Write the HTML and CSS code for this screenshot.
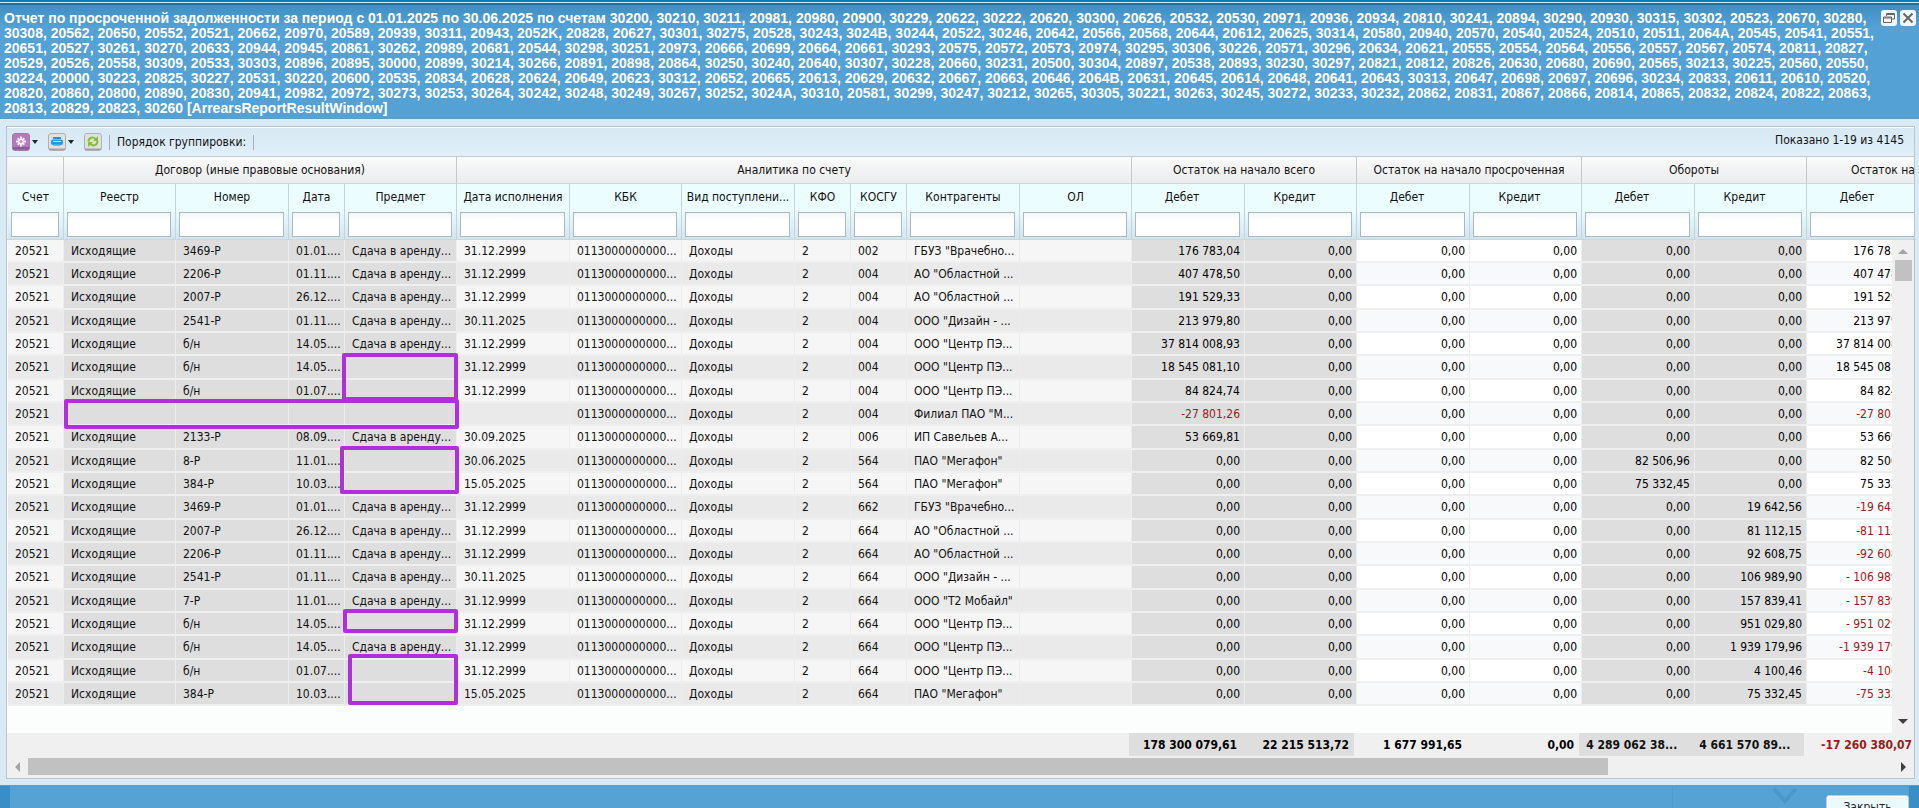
FILE: index.html
```html
<!DOCTYPE html>
<html lang="ru">

<head>
    <meta charset="UTF-8">
    <meta name="viewport" content="width=device-width, initial-scale=1.0">
    <title>Отчет по просроченной задолженности</title>
    <link rel="stylesheet" href="styles.css">
</head>

<body>
    <div class="window">
        <header class="window-header">
            <h1 class="window-title">Отчет по просроченной задолженности за период с 01.01.2025 по 30.06.2025 по счетам 30200, 30210, 30211, 20981, 20980, 20900, 30229, 20622, 30222, 20620, 30300, 20626, 20532, 20530, 20971, 20936, 20934, 20810, 30241, 20894, 30290, 20930, 30315, 30302, 20523, 20670, 30280,<br>
                30308, 20562, 20650, 20552, 20521, 20662, 20970, 20589, 20939, 30311, 20943, 2052K, 20828, 20627, 30301, 30275, 20528, 30243, 3024B, 30244, 20522, 30246, 20642, 20566, 20568, 20644, 20612, 20625, 30314, 20580, 20940, 20570, 20540, 20524, 20510, 20511, 2064A, 20545, 20541, 20551,<br>
                20651, 20527, 30261, 30270, 20633, 20944, 20945, 20861, 30262, 20989, 20681, 20544, 30298, 30251, 20973, 20666, 20699, 20664, 20661, 30293, 20575, 20572, 20573, 20974, 30295, 30306, 30226, 20571, 30296, 20634, 20621, 20555, 20554, 20564, 20556, 20557, 20567, 20574, 20811, 20827,<br>
                20529, 20526, 20558, 30309, 20533, 30303, 20896, 20895, 30000, 20899, 30214, 30266, 20891, 20898, 20864, 30250, 30240, 20640, 30307, 30228, 20660, 30231, 20500, 30304, 20897, 20538, 20893, 30230, 30297, 20821, 20812, 20826, 20630, 20680, 20690, 20565, 30213, 30225, 20560, 20550,<br>
                30224, 20000, 30223, 20825, 30227, 20531, 30220, 20600, 20535, 20834, 20628, 20624, 20649, 20623, 30312, 20652, 20665, 20613, 20629, 20632, 20667, 20663, 20646, 2064B, 20631, 20645, 20614, 20648, 20641, 20643, 30313, 20647, 20698, 20697, 20696, 30234, 20833, 20611, 20610, 20520,<br>
                20820, 20860, 20800, 20890, 20830, 20941, 20982, 20972, 30273, 30253, 30264, 30242, 30248, 30249, 30267, 30252, 3024A, 30310, 20581, 30299, 30247, 30212, 30265, 30305, 30221, 30263, 30245, 30272, 30233, 30232, 20862, 20831, 20867, 20866, 20814, 20865, 20832, 20824, 20822, 20863,<br>
                20813, 20829, 20823, 30260 [ArrearsReportResultWindow]</h1>
            <div class="window-tools">
                <button type="button" class="tool" aria-label="Восстановить">
                    <svg viewBox="0 0 16 16">
                        <path d="M5.500 6V3.500h8V9H11" />
                        <path d="M5.500 4.500h8" />
                        <path d="M2.500 7h8v5.500h-8z" />
                        <path d="M2.500 8h8" />
                    </svg>
                </button>
                <button type="button" class="tool" aria-label="Закрыть окно">
                    <svg viewBox="0 0 16 16">
                        <path class="thick" d="M3.500 3.500l9 9M12.500 3.500l-9 9" />
                    </svg>
                </button>
            </div>
        </header>

        <main class="window-body">
            <section class="panel">
                <div class="toolbar">
                    <button type="button" class="icon-btn" aria-label="Настройки">
                        <svg class="icon" viewBox="0 0 18 18">
                            <rect x="0.500" y="0.500" width="17" height="17" rx="2.500" fill="#b878bd" stroke="#a07ba8" />
                            <path d="M1 14h16v2.500H1z" fill="#8a5a94" />
                            <path d="M9 3.500v10M4 8.500h10M5.700 5.200l6.600 6.600M12.300 5.200l-6.600 6.600" stroke="#fbeefb" stroke-width="2" />
                            <circle cx="9" cy="8.500" r="1.500" fill="#c48ac8" />
                        </svg>
                        <span class="arrow-down"></span>
                    </button>
                    <button type="button" class="icon-btn" aria-label="Печать">
                        <svg class="icon" viewBox="0 0 18 18">
                            <rect x="0.500" y="0.500" width="17" height="17" rx="2.500" fill="#e0e0e0" stroke="#b0b0b0" />
                            <path d="M1 15.500h16v1.500H1z" fill="#a2a2a2" />
                            <path d="M5 4h8v2H5z" fill="#2b8fd3" />
                            <rect x="3" y="6.500" width="12" height="5.500" rx="2" fill="#2497df" />
                            <path d="M5 8.500h8" stroke="#bfe2f7" />
                            <path d="M5.500 11.500h7V13h-7z" fill="#6fb9e6" />
                        </svg>
                        <span class="arrow-down"></span>
                    </button>
                    <button type="button" class="icon-btn" aria-label="Обновить">
                        <svg class="icon" viewBox="0 0 18 18">
                            <rect x="0.500" y="0.500" width="17" height="17" rx="2.500" fill="#e0e0e0" stroke="#b0b0b0" />
                            <path d="M1 15.500h16v1.500H1z" fill="#a2a2a2" />
                            <path d="M4.500 8.500C4.500 4.500 9 3.500 11.500 6M13.500 8C13.500 12.500 9 13.500 6.500 11" fill="none" stroke="#82bd45" stroke-width="2" />
                            <path d="M14 3v5H9zM4 14V9h5z" fill="#82bd45" />
                        </svg>
                    </button>
                    <span class="separator"></span>
                    <span class="grouping">Порядок группировки:</span>
                    <span class="separator"></span>
                    <span class="shown">Показано 1-19 из 4145</span>
                </div>

                <div class="grid-head">
                    <table class="grid" id="head">
                        <thead>
                            <tr class="groups">
                                <th></th>
                                <th colspan="4">Договор (иные правовые основания)</th>
                                <th colspan="7">Аналитика по счету</th>
                                <th colspan="2">Остаток на начало всего</th>
                                <th colspan="2">Остаток на начало просроченная</th>
                                <th colspan="2">Обороты</th>
                                <th colspan="2">Остаток на конец всего</th>
                            </tr>
                            <tr class="names"></tr>
                            <tr class="filters"></tr>
                        </thead>
                    </table>
                </div>

                <div class="grid-body">
                    <div class="rows">
                        <table class="grid" id="rows">
                            <tbody></tbody>
                        </table>
                        <div class="mark mark-a"></div>
                        <div class="mark mark-b"></div>
                        <div class="mark mark-c"></div>
                        <div class="mark mark-d"></div>
                        <div class="mark mark-e"></div>
                    </div>
                    <div class="vscroll">
                        <span class="arrow arrow-up"></span>
                        <span class="vthumb"></span>
                        <span class="arrow arrow-bottom"></span>
                    </div>
                </div>

                <div class="grid-foot">
                    <table class="grid" id="foot">
                        <tbody>
                            <tr>
                                <td colspan="12"></td>
                                <td class="dark num">178 300 079,61</td>
                                <td class="dark num">22 215 513,72</td>
                                <td class="num">1 677 991,65</td>
                                <td class="num">0,00</td>
                                <td class="dark">4 289 062 38...</td>
                                <td class="dark">4 661 570 89...</td>
                                <td class="num minus">-17 260 380,07</td>
                                <td></td>
                            </tr>
                        </tbody>
                    </table>
                </div>

                <div class="hscroll">
                    <span class="arrow arrow-left"></span>
                    <div class="htrack"><span class="hthumb"></span></div>
                    <span class="arrow arrow-right"></span>
                </div>
            </section>
        </main>

        <footer class="window-footer">
            <div class="footer-inner">
                <span class="footer-line"></span>
                <svg class="chevron" viewBox="0 0 28 18">
                    <path d="M3 2l11 12L25 2" />
                </svg>
                <button type="button" class="close-btn">Закрыть</button>
            </div>
        </footer>
    </div>
    <script src="script.js"></script>
</body>

</html>
```
FILE: styles.css
```css
* {
    box-sizing: border-box;
}

body {
    margin: 0;
    font-family: 'DejaVu Sans Condensed', 'Noto Sans', sans-serif;
    font-size: 12px;
    color: #111;
    background: #56a2d5;
}

button {
    font-family: inherit;
    font-size: inherit;
}

.window {
    display: flex;
    flex-direction: column;
    height: 100vh;
    overflow: hidden;
    border-top: 2px solid #0b80b8;
}

/* header */
.window-header {
    display: flex;
    align-items: flex-start;
    justify-content: space-between;
    padding: 4px 3px 2px 4px;
    border-top: 1px solid #d5eefa;
    box-shadow: inset 0 2px 0 #1a6ea3;
    border-bottom: 1px solid #5f9cc0;
    background: linear-gradient(#3d8dc0, #54a1d5 24px);
}

.window-title {
    margin: 4px 0 0;
    font-family: 'Liberation Sans', Arial, sans-serif;
    font-size: 14px;
    line-height: 15px;
    font-weight: bold;
    color: #fff;
    white-space: nowrap;
}

.window-tools {
    display: flex;
    gap: 3px;
    padding-top: 3px;
}

.tool {
    display: flex;
    width: 16px;
    height: 16px;
    padding: 0;
    border: 0;
    border-radius: 3px;
    background: #f3f5f7;
}

.tool svg {
    width: 16px;
    height: 16px;
    fill: none;
    stroke: #666;
}

.tool .thick {
    stroke-width: 2;
}

/* panel */
.window-body {
    flex: 1;
    display: flex;
    min-height: 0;
    padding: 7px 4px 6px 6px;
    background: #d9eaf4;
}

.panel {
    flex: 1;
    display: flex;
    flex-direction: column;
    min-width: 0;
    border: 1px solid #b9c6ce;
    background: #f0f0f0;
}

.toolbar {
    display: flex;
    align-items: center;
    height: 30px;
    padding: 0 10px 0 5px;
    border-top: 1px solid #fff;
    border-bottom: 1px solid #c3cdd4;
    background: linear-gradient(#d8e9f4, #e0effa);
}

.icon-btn {
    display: flex;
    align-items: center;
    gap: 2px;
    padding: 0;
    margin-right: 10px;
    border: 0;
    background: none;
}

.icon {
    width: 18px;
    height: 18px;
}

.arrow-down {
    border: 3px solid transparent;
    border-top: 4px solid #222;
    border-bottom: 0;
}

.separator {
    width: 1px;
    height: 15px;
    background: #a5b1b9;
}

.icon-btn + .separator {
    margin-left: -3px;
}

.grouping {
    margin: 0 7px;
}

.shown {
    margin: 0 0 4px auto;
}

/* grid */
.grid-head,
.grid-body,
.grid-foot {
    padding-left: 1px;
    overflow: hidden;
}

.grid {
    table-layout: fixed;
    width: 2024px;
    border-collapse: separate;
    border-spacing: 0;
}

.grid th,
.grid td {
    padding: 0 7px;
    overflow: hidden;
    white-space: nowrap;
    font-weight: normal;
    text-align: left;
}

.grid-head {
    border-bottom: 1px solid #c9d6de;
}

.groups th {
    height: 27px;
    border-right: 1px solid #c4c8cb;
    border-bottom: 1px solid #cfd8dc;
    background: linear-gradient(#fafafa, #ebecee);
}

.grid .groups th {
    text-align: center;
}

.grid .names th {
    height: 26px;
    padding: 0 2px;
    border-right: 1px solid #c7d3da;
    background: #ebfdff;
    text-align: center;
}

.grid .names .num {
    padding-right: 14px;
}

.grid .filters th {
    height: 29px;
    padding: 0 4px 0 3px;
    border-right: 1px solid #c7d3da;
    background: linear-gradient(#ebfdff, #d3e4ee);
}

.filters input {
    display: block;
    width: 100%;
    height: 25px;
    padding: 0 4px;
    border: 1px solid #aab9c2;
    background: linear-gradient(#f2f5f7, #fff 8px);
    font: inherit;
}

.grid-body {
    flex: 1;
    display: flex;
    min-height: 0;
    background: #fcfdfd;
}

.rows {
    position: relative;
    flex: 1;
    min-width: 0;
    overflow: hidden;
}

#rows td {
    height: 23px;
    border-right: 1px solid #ededed;
    border-bottom: 2px solid #efefef;
    background: #f6f6f6;
}

#rows tr:nth-child(3n) td {
    height: 24px;
}

#rows tr:nth-child(even) td {
    background: #eaeaea;
}

#rows td.light {
    background: #fff;
}

#rows tr:nth-child(even) td.light {
    background: #f7f9fa;
}

#rows tr td.dark {
    background: #dedede;
}

.grid td.num {
    padding: 0 4px 0 2px;
    text-align: right;
    color: #000;
}

.grid td.minus {
    color: #a01818;
}

/* selected areas over the rows */
.mark {
    position: absolute;
    border: 4px solid #b02fdb;
    border-radius: 2px;
}

.mark-a {
    left: 334px;
    top: 113px;
    width: 116px;
    height: 48px;
}

.mark-b {
    left: 56px;
    top: 159px;
    width: 395px;
    height: 30px;
}

.mark-c {
    left: 332px;
    top: 206px;
    width: 119px;
    height: 48px;
}

.mark-d {
    left: 335px;
    top: 369px;
    width: 115px;
    height: 24px;
}

.mark-e {
    left: 340px;
    top: 414px;
    width: 110px;
    height: 51px;
}

/* scrollbars */
.vscroll {
    display: flex;
    flex-direction: column;
    align-items: center;
    width: 22px;
    padding: 9px 0;
    background: #f0f0f0;
}

.arrow {
    flex: none;
    border: 5px solid transparent;
}

.arrow-up {
    border-bottom-color: #a3a3a3;
    border-top: 0;
}

.arrow-bottom {
    margin-top: auto;
    border-top-color: #404040;
    border-bottom: 0;
}

.vthumb {
    width: 17px;
    height: 21px;
    margin-top: 6px;
    background: #c1c1c1;
}

.grid-foot {
    height: 25px;
    padding-left: 0;
    margin-left: -2px;
}

#foot td {
    height: 23px;
    font-weight: bold;
}

#foot .dark {
    background: #dedede;
}

#foot .num {
    padding-right: 5px;
}

.hscroll {
    display: flex;
    align-items: center;
    height: 17px;
    margin-bottom: 3px;
    padding: 0 8px;
}

.arrow-left {
    border-right-color: #a3a3a3;
    border-left: 0;
}

.arrow-right {
    border-left-color: #404040;
    border-right: 0;
}

.htrack {
    flex: 1;
    margin: 0 14px 0 8px;
}

.hthumb {
    display: block;
    width: 85%;
    height: 17px;
    background: #c1c1c1;
}

/* footer */
.window-footer {
    height: 23px;
    padding: 0 10px;
    border-top: 1px solid #5f9cc0;
    background: #3a8ec6;
}

.footer-inner {
    display: flex;
    justify-content: flex-end;
    height: 22px;
    overflow: hidden;
    background: #56a2d5;
}

.footer-line {
    width: 1px;
    background: #4f9bce;
}

.chevron {
    width: 28px;
    height: 18px;
    margin: 1px 27px 0 98px;
    fill: none;
    stroke: #4c97ca;
    stroke-width: 4;
}

.close-btn {
    flex: none;
    width: 83px;
    height: 24px;
    margin-top: 9px;
    padding: 0;
    border: 1px solid #b8ced9;
    border-radius: 3px;
    background: #ebfbfd;
    box-shadow: inset 0 0 0 1px #fff;
    color: #222;
}
```
FILE: script.js
```js
const columns = [
    { name: 'Счет', width: 56 },
    { name: 'Реестр', width: 112, cls: 'dark' },
    { name: 'Номер', width: 113, cls: 'dark' },
    { name: 'Дата', width: 56, cls: 'dark' },
    { name: 'Предмет', width: 112, cls: 'dark' },
    { name: 'Дата исполнения', width: 113 },
    { name: 'КБК', width: 112 },
    { name: 'Вид поступлени...', width: 113 },
    { name: 'КФО', width: 56 },
    { name: 'КОСГУ', width: 56 },
    { name: 'Контрагенты', width: 113 },
    { name: 'ОЛ', width: 112 },
    { name: 'Дебет', width: 113, cls: 'dark num' },
    { name: 'Кредит', width: 112, cls: 'dark num' },
    { name: 'Дебет', width: 113, cls: 'light num' },
    { name: 'Кредит', width: 112, cls: 'light num' },
    { name: 'Дебет', width: 113, cls: 'dark num' },
    { name: 'Кредит', width: 112, cls: 'dark num' },
    { name: 'Дебет', width: 113, cls: 'light num' },
    { name: 'Кредит', width: 112, cls: 'light num' },
];

const reg = 'Исходящие';
const rent = 'Сдача в аренду...';

// реестр, номер, дата, предмет, дата исполнения, КОСГУ, контрагент, остаток, обороты Дт, обороты Кт, остаток на конец
const data = [
    [reg, '3469-Р', '01.01....', rent, '31.12.2999', '002', 'ГБУЗ "Врачебно...', '176 783,04', '0,00', '0,00', '176 783,04'],
    [reg, '2206-Р', '01.11....', rent, '31.12.2999', '004', 'АО "Областной ...', '407 478,50', '0,00', '0,00', '407 478,50'],
    [reg, '2007-Р', '26.12....', rent, '31.12.2999', '004', 'АО "Областной ...', '191 529,33', '0,00', '0,00', '191 529,33'],
    [reg, '2541-Р', '01.11....', rent, '30.11.2025', '004', 'ООО "Дизайн - ...', '213 979,80', '0,00', '0,00', '213 979,80'],
    [reg, 'б/н', '14.05....', rent, '31.12.2999', '004', 'ООО "Центр ПЭ...', '37 814 008,93', '0,00', '0,00', '37 814 008,93'],
    [reg, 'б/н', '14.05....', '', '31.12.2999', '004', 'ООО "Центр ПЭ...', '18 545 081,10', '0,00', '0,00', '18 545 081,10'],
    [reg, 'б/н', '01.07....', '', '31.12.2999', '004', 'ООО "Центр ПЭ...', '84 824,74', '0,00', '0,00', '84 824,74'],
    ['', '', '', '', '', '004', 'Филиал ПАО "М...', '-27 801,26', '0,00', '0,00', '-27 801,26'],
    [reg, '2133-Р', '08.09....', rent, '30.09.2025', '006', 'ИП Савельев А...', '53 669,81', '0,00', '0,00', '53 669,81'],
    [reg, '8-Р', '11.01....', '', '30.06.2025', '564', 'ПАО "Мегафон"', '0,00', '82 506,96', '0,00', '82 506,96'],
    [reg, '384-Р', '10.03....', '', '15.05.2025', '564', 'ПАО "Мегафон"', '0,00', '75 332,45', '0,00', '75 332,45'],
    [reg, '3469-Р', '01.01....', rent, '31.12.2999', '662', 'ГБУЗ "Врачебно...', '0,00', '0,00', '19 642,56', '-19 642,56'],
    [reg, '2007-Р', '26.12....', rent, '31.12.2999', '664', 'АО "Областной ...', '0,00', '0,00', '81 112,15', '-81 112,15'],
    [reg, '2206-Р', '01.11....', rent, '31.12.2999', '664', 'АО "Областной ...', '0,00', '0,00', '92 608,75', '-92 608,75'],
    [reg, '2541-Р', '01.11....', rent, '30.11.2025', '664', 'ООО "Дизайн - ...', '0,00', '0,00', '106 989,90', '- 106 989,90'],
    [reg, '7-Р', '11.01....', rent, '31.12.9999', '664', 'ООО "Т2 Мобайл"', '0,00', '0,00', '157 839,41', '- 157 839,41'],
    [reg, 'б/н', '14.05....', '', '31.12.2999', '664', 'ООО "Центр ПЭ...', '0,00', '0,00', '951 029,80', '- 951 029,80'],
    [reg, 'б/н', '14.05....', rent, '31.12.2999', '664', 'ООО "Центр ПЭ...', '0,00', '0,00', '1 939 179,96', '-1 939 179,96'],
    [reg, 'б/н', '01.07....', '', '31.12.2999', '664', 'ООО "Центр ПЭ...', '0,00', '0,00', '4 100,46', '-4 100,46'],
    [reg, '384-Р', '10.03....', '', '15.05.2025', '664', 'ПАО "Мегафон"', '0,00', '0,00', '75 332,45', '-75 332,45'],
];

const cols = columns.map(c => `<col style="width: ${c.width}px">`).join('');
document.querySelectorAll('.grid').forEach(table => {
    table.insertAdjacentHTML('afterbegin', `<colgroup>${cols}</colgroup>`);
});

document.querySelector('.names').innerHTML = columns
    .map(c => `<th class="${(c.cls || '').replace('dark', '')}">${c.name}</th>`)
    .join('');

document.querySelector('.filters').innerHTML = columns
    .map(c => `<th><input type="text" aria-label="${c.name}"></th>`)
    .join('');

document.querySelector('#rows tbody').innerHTML = data.map(row => {
    const [registry, number, date, subject, due, kosgu, partner, start, debit, credit, end] = row;
    const cells = ['20521', registry, number, date, subject, due, '0113000000000...', 'Доходы', '2', kosgu, partner, '',
        start, '0,00', '0,00', '0,00', debit, credit, end, '0,00'];
    const tds = cells.map((text, i) => {
        const minus = text.startsWith('-') ? ' minus' : '';
        return `<td class="${columns[i].cls || ''}${minus}">${text}</td>`;
    });
    return `<tr>${tds.join('')}</tr>`;
}).join('');
```
